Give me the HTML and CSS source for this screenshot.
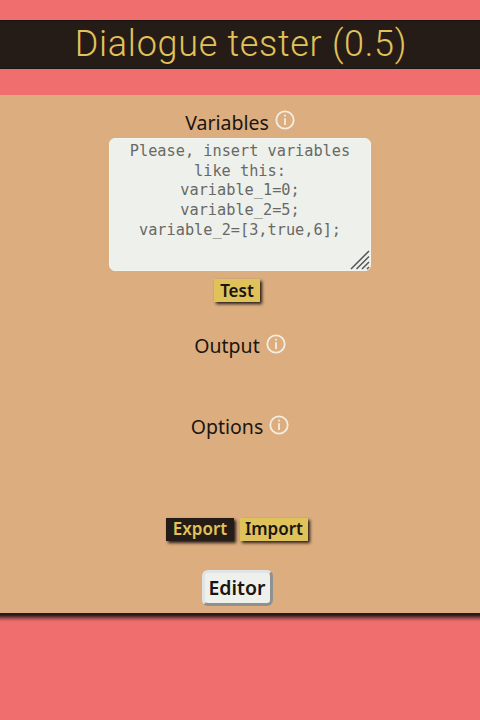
FILE: index.html
```html
<!DOCTYPE html>
<html lang="en">
<head>
<meta charset="utf-8">
<title>Dialogue tester</title>
<link rel="stylesheet" href="styles.css">
</head>
<body>
<header class="header"><h1 class="title">Dialogue tester (0.5)</h1></header>
<main class="panel">
  <section class="variables">
    <h2 class="label"><span>Variables</span><svg class="info" viewBox="0 0 20 20"><circle cx="10" cy="10" r="8.7"/><path d="M10 8.2V15M10 4.8V6.5"/></svg></h2>
    <div class="editor-box">
      <div class="placeholder">Please, insert variables<br>like this:<br>variable_1=0;<br>variable_2=5;<br>variable_2=[3,true,6];</div>
      <svg class="grip" viewBox="0 0 20 20"><path d="M1 19L19 1M6.5 19L19 6.5M12 19L19 12M17 19L19 17"/></svg>
    </div>
    <button class="btn test">Test</button>
  </section>
  <section class="output">
    <h2 class="label"><span>Output</span><svg class="info" viewBox="0 0 20 20"><circle cx="10" cy="10" r="8.7"/><path d="M10 8.2V15M10 4.8V6.5"/></svg></h2>
  </section>
  <section class="options">
    <h2 class="label"><span>Options</span><svg class="info" viewBox="0 0 20 20"><circle cx="10" cy="10" r="8.7"/><path d="M10 8.2V15M10 4.8V6.5"/></svg></h2>
  </section>
  <div class="files">
    <button class="btn dark">Export</button>
    <button class="btn import">Import</button>
  </div>
  <button class="editor-btn">Editor</button>
</main>
<div class="panel-shadow"></div>
</body>
</html>
```
FILE: styles.css
```css
* { box-sizing: border-box; }
body {
  margin: 0;
  min-height: 100vh;
  padding-top: 20px;
  background: #f06f6e;
  color: #1b1512;
  font-family: "Noto Sans", sans-serif;
}
.header {
  height: 49px;
  background: #261c17;
  border-top: 1px solid #1b1512;
  border-bottom: 1px solid #1b1512;
}
.title {
  margin: 0;
  padding-left: 2px;
  text-align: center;
  font: 300 36px/46px Roboto, sans-serif;
  letter-spacing: 0.7px;
  color: #e2c25a;
  white-space: nowrap;
}
.panel {
  height: 520px;
  margin-top: 26px;
  padding-top: 15px;
  display: flex;
  flex-direction: column;
  align-items: center;
  background: #dcae7f;
  border-bottom: 2px solid #261c17;
}
.panel-shadow {
  height: 7px;
  background: linear-gradient(#261c17, rgba(38, 28, 23, 0.55) 35%, rgba(38, 28, 23, 0.12) 75%, transparent);
}
.variables {
  height: 223px;
  display: flex;
  flex-direction: column;
  align-items: center;
}
.label {
  height: 28px;
  margin: 0;
  display: flex;
  justify-content: center;
  gap: 6px;
  font-size: 19.5px;
  font-weight: 400;
  line-height: 26px;
}
.info {
  width: 20px;
  height: 20px;
  fill: none;
  stroke: #f4ede2;
  stroke-width: 1.8;
}
.output .info, .options .info { margin-top: 1px; }
.editor-box {
  position: relative;
  width: 262px;
  height: 133px;
  padding-top: 3px;
  border: 1px solid #f2f4ef;
  border-radius: 6px;
  background: #eef0eb;
  text-align: center;
}
.placeholder {
  font: 15.25px/19.7px "DejaVu Sans Mono", monospace;
  color: #686966;
  white-space: nowrap;
}
.grip {
  position: absolute;
  right: 0;
  bottom: 0;
  width: 20px;
  height: 20px;
  fill: none;
  stroke: #555;
  stroke-width: 1.5;
}
.btn {
  height: 23px;
  padding: 0;
  border: 0;
  background: #e0c25a;
  color: #1b1512;
  font: 600 17px/21px "Noto Sans", sans-serif;
  text-align: center;
  box-shadow: 2px 2px 3px #261c17;
  display: block;
}
.btn.dark { background: #261c17; color: #e2c25a; }
.test { width: 46px; margin: 8px 6px 0 0; padding-bottom: 1px; }
.output { height: 81px; }
.options { height: 104px; }
.files { display: flex; gap: 6px; height: 52px; margin-right: 6px; }
.files .btn { width: 68px; padding-bottom: 2px; }
.editor-btn {
  width: 71px;
  height: 36px;
  margin-right: 6px;
  padding: 0;
  border: 3px outset #e1e4e5;
  border-radius: 6px;
  background: #eef0eb;
  color: #1b1512;
  font: 600 19.5px/28px "Noto Sans", sans-serif;
  flex-shrink: 0;
}
```
